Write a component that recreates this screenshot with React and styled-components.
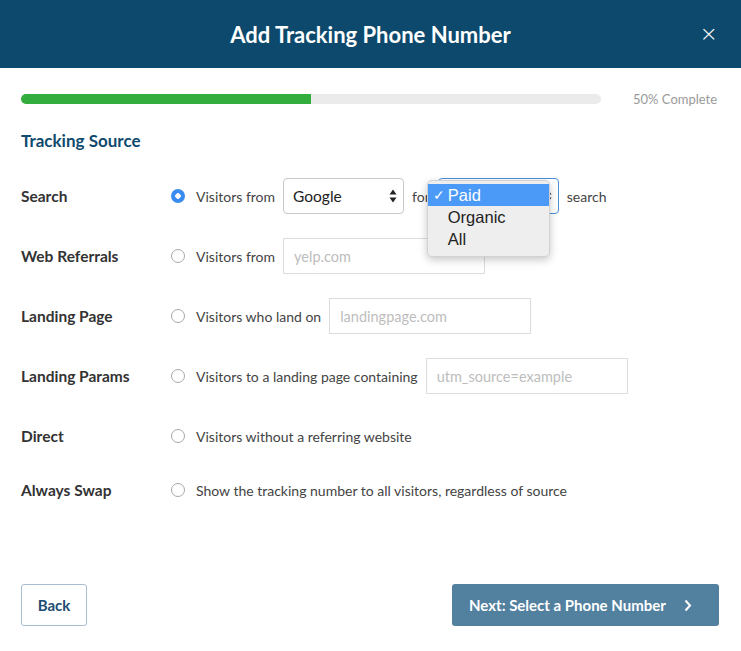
import styled, { createGlobalStyle } from "styled-components";

const GlobalStyle = createGlobalStyle`
  body {
    margin: 0;
    background: #fff;
    font-family: Lato, "Open Sans", sans-serif;
  }
`;

const rows = [
  { label: "Search", checked: true, kind: "search" },
  { label: "Web Referrals", text: "Visitors from", placeholder: "yelp.com", width: 202 },
  { label: "Landing Page", text: "Visitors who land on", placeholder: "landingpage.com", width: 202 },
  { label: "Landing Params", text: "Visitors to a landing page containing", placeholder: "utm_source=example", width: 202 },
  { label: "Direct", text: "Visitors without a referring website" },
  { label: "Always Swap", text: "Show the tracking number to all visitors, regardless of source", last: true },
];

const Arrows = () => (
  <svg width="8" height="14" viewBox="0 0 8 14">
    <path d="M4 0.5 L7.5 5.5 H0.5 Z" fill="#222" />
    <path d="M4 13.5 L7.5 8.5 H0.5 Z" fill="#222" />
  </svg>
);

function Main() {
  return (
    <>
      <GlobalStyle />
      <Modal>
        <Header>
          <Title>Add Tracking Phone Number</Title>
          <Close>×</Close>
        </Header>
        <Body>
          <ProgressRow>
            <Track>
              <Fill style={{ width: "50%" }} />
            </Track>
            <ProgressText>50% Complete</ProgressText>
          </ProgressRow>
          <Heading>Tracking Source</Heading>
          {rows.map((r) => (
            <Row key={r.label} $last={r.last}>
              <Label>{r.label}</Label>
              <Option>
                <Radio $checked={r.checked} />
                {r.kind === "search" ? (
                  <>
                    <Text>Visitors from</Text>
                    <Select $width={121}>
                      <span>Google</span>
                      <Arrows />
                    </Select>
                    <Text>for</Text>
                    <SelectWrap>
                      <Select $width={121} $focused>
                        <span>Paid</span>
                        <Arrows />
                      </Select>
                      <Popup>
                        <PopupItem $active>
                          <Check>✓</Check>Paid
                        </PopupItem>
                        <PopupItem>Organic</PopupItem>
                        <PopupItem>All</PopupItem>
                      </Popup>
                    </SelectWrap>
                    <Text>search</Text>
                  </>
                ) : (
                  <>
                    <Text>{r.text}</Text>
                    {r.placeholder && <Input $width={r.width} placeholder={r.placeholder} />}
                  </>
                )}
              </Option>
            </Row>
          ))}
        </Body>
        <Footer>
          <BackButton>Back</BackButton>
          <NextButton>
            Next: Select a Phone Number
            <svg width="8" height="13" viewBox="0 0 8 13">
              <path d="M1.5 1.5 L6 6.5 L1.5 11.5" stroke="#fff" strokeWidth="2" fill="none" />
            </svg>
          </NextButton>
        </Footer>
      </Modal>
    </>
  );
}

const Modal = styled.div`
  width: 741px;
  height: 651px;
  display: flex;
  flex-direction: column;
  background: #fff;
`;

const Header = styled.div`
  height: 68px;
  background: #0d496c;
  display: flex;
  align-items: center;
  justify-content: center;
  position: relative;
`;

const Title = styled.div`
  color: #fff;
  font-size: 22px;
  font-weight: 700;
`;

const Close = styled.div`
  position: absolute;
  right: 23px;
  top: 21px;
  color: #fff;
  font-size: 22px;
  font-family: "DejaVu Sans", sans-serif;
  font-weight: 300;
`;

const Body = styled.div`
  flex: 1;
  padding: 0 22px 0 21px;
`;

const ProgressRow = styled.div`
  display: flex;
  align-items: center;
  height: 20px;
  margin-top: 21px;
  gap: 32px;
`;

const Track = styled.div`
  width: 580px;
  height: 10px;
  border-radius: 5px;
  background: #ebebeb;
  overflow: hidden;
`;

const Fill = styled.div`
  height: 100%;
  background: #32ad3e;
`;

const ProgressText = styled.div`
  font-size: 13px;
  color: #9a9a9a;
`;

const Heading = styled.div`
  margin: 20px 0 13px;
  height: 24px;
  line-height: 24px;
  font-size: 17px;
  font-weight: 700;
  color: #104a6e;
`;

const Row = styled.div`
  display: flex;
  align-items: center;
  height: ${(p) => (p.$last ? 48 : 60)}px;
`;

const Label = styled.div`
  width: 150px;
  flex-shrink: 0;
  font-size: 15.5px;
  font-weight: 700;
  color: #333;
`;

const Option = styled.div`
  display: flex;
  align-items: center;
  gap: 8px;
`;

const Radio = styled.span`
  width: 14px;
  height: 14px;
  box-sizing: border-box;
  border-radius: 50%;
  margin-right: 3px;
  border: ${(p) => (p.$checked ? "none" : "1px solid #a8a8a8")};
  background: ${(p) =>
    p.$checked ? "radial-gradient(circle, #fff 0 2.5px, #3b8cf0 3px)" : "#fff"};
`;

const Text = styled.span`
  font-size: 14px;
  color: #444;
`;

const Select = styled.div`
  width: ${(p) => p.$width}px;
  height: 36px;
  box-sizing: border-box;
  border: 1px solid ${(p) => (p.$focused ? "#4a90d9" : "#c9c9c9")};
  border-radius: 4px;
  background: #fff;
  display: flex;
  align-items: center;
  justify-content: space-between;
  padding: 0 6px 0 9px;
  font-size: 15.5px;
  color: #222;
`;

const SelectWrap = styled.div`
  position: relative;
`;

const Popup = styled.div`
  position: absolute;
  left: -11px;
  top: 2px;
  width: 123px;
  box-sizing: border-box;
  padding: 3px 0 6px;
  background: #eeeeee;
  border: 1px solid #d2d2d2;
  border-radius: 5px;
  box-shadow: 0 3px 8px rgba(0, 0, 0, 0.22);
  font-family: "Liberation Sans", Arial, sans-serif;
  font-size: 16.5px;
  z-index: 2;
`;

const PopupItem = styled.div`
  position: relative;
  height: 22px;
  line-height: 22px;
  padding-left: 20px;
  color: ${(p) => (p.$active ? "#fff" : "#222")};
  background: ${(p) => (p.$active ? "#4c9af8" : "transparent")};
`;

const Check = styled.span`
  position: absolute;
  left: 5px;
  font-size: 14px;
`;

const Input = styled.input`
  width: ${(p) => p.$width}px;
  height: 36px;
  box-sizing: border-box;
  border: 1px solid #dcdcdc;
  border-radius: 0;
  padding: 0 10px;
  font-family: inherit;
  font-size: 14.5px;
  outline: none;
  &::placeholder {
    color: #bdbdbd;
  }
`;

const Footer = styled.div`
  display: flex;
  justify-content: space-between;
  padding: 0 22px 25px 21px;
`;

const BackButton = styled.button`
  width: 66px;
  height: 42px;
  border: 1px solid #a9bed0;
  border-radius: 3px;
  background: #fff;
  color: #1c4c71;
  font-family: inherit;
  font-size: 15px;
  font-weight: 700;
`;

const NextButton = styled.button`
  width: 267px;
  height: 42px;
  border: none;
  border-radius: 3px;
  background: #52809f;
  color: #fff;
  font-family: inherit;
  font-size: 15px;
  font-weight: 700;
  display: flex;
  align-items: center;
  justify-content: flex-start;
  gap: 18px;
  padding-left: 17px;
`;

export default Main;
